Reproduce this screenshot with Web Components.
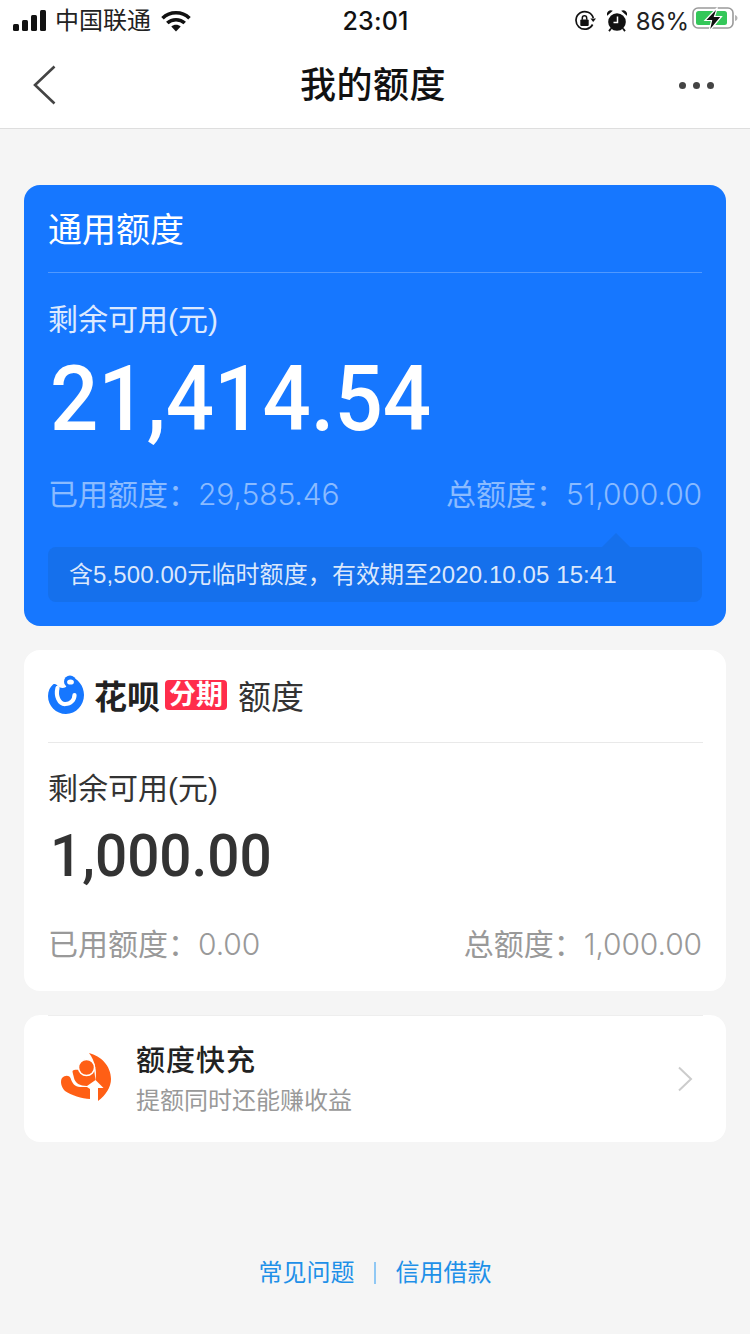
<!DOCTYPE html>
<html lang="zh">
<head>
<meta charset="utf-8">
<title>我的额度</title>
<style>
  html, body { margin: 0; padding: 0; }
  body {
    width: 750px;
    height: 1334px;
    overflow: hidden;
    background: #f5f5f5;
    font-family: "Liberation Sans", "Noto Sans CJK SC", sans-serif;
  }
</style>
</head>
<body>
<app-header></app-header>
<quota-page>
  <quota-card variant="blue" remain="21,414.54" used="29,585.46" total="51,000.00">
    <span slot="title">通用额度</span>
    <temp-note slot="note">含5,500.00元临时额度，有效期至2020.10.05 15:41</temp-note>
  </quota-card>
  <quota-card remain="1,000.00" used="0.00" total="1,000.00">
    <huabei-title slot="title"></huabei-title>
  </quota-card>
  <boost-row></boost-row>
</quota-page>
<page-footer></page-footer>

<script>
class AppHeader extends HTMLElement {
  constructor() {
    super();
    this.attachShadow({ mode: 'open' });
  }

  connectedCallback() {
    this.shadowRoot.innerHTML = `
      <style>
        :host { display: block; background: #fff; border-bottom: 1px solid #dedede; height: 128px; color: #111; }
        .status { height: 42px; display: grid; grid-template-columns: 1fr auto 1fr; align-items: center; padding: 0 12px 0 13px; }
        .left, .right { display: flex; align-items: center; }
        .right { justify-content: flex-end; }
        .carrier { font-size: 24px; margin: 0 10px 0 9px; color: #222; line-height: 42px; }
        .time { font-size: 25px; font-weight: 500; font-family: Inter, "Liberation Sans", sans-serif; letter-spacing: 0.2px; }
        .pct { font-size: 24px; font-family: Inter, "Liberation Sans", sans-serif; margin: 0 3px 0 9px; color: #222; }
        .battery { margin-bottom: 4px; overflow: visible; }
        .nav { height: 86px; display: grid; grid-template-columns: 1fr auto 1fr; align-items: center; padding: 0 36px 0 32px; }
        h1 { margin: 0 0 6px; font-size: 36px; font-weight: 500; color: #111; letter-spacing: .5px; }
        .more { justify-self: end; display: flex; gap: 7px; }
        .more i { width: 7px; height: 7px; border-radius: 50%; background: #444; }
        svg { display: block; }
      </style>
      <div class="status">
        <div class="left">
          <svg width="33" height="22" viewBox="0 0 33 22" fill="#111"><rect x="0" y="14" width="6" height="7" rx="1.5"/><rect x="9" y="10" width="6" height="11" rx="1.5"/><rect x="18" y="5" width="6" height="16" rx="1.5"/><rect x="27" y="0" width="6" height="21" rx="1.5"/></svg>
          <span class="carrier">中国联通</span>
          <svg width="30" height="22" viewBox="0 0 30 22" fill="none" stroke="#111" stroke-width="3.6"><path d="M1.5 8.200C9 1 21 1 28.500 8.200"/><path d="M6.300 13C11 8.600 19 8.600 23.700 13"/><path d="M15 21.500l-4.700-5c2.600-2.200 6.800-2.200 9.400 0z" fill="#111" stroke="none"/></svg>
        </div>
        <div class="time">23:01</div>
        <div class="right">
          <svg width="22" height="22" viewBox="0 0 22 22" fill="none"><path d="M18.600 14.500A8.800 8.800 0 1 1 19.300 8" stroke="#111" stroke-width="1.700"/><path d="M16.400 8.500h5.600l-2.800 3.600z" fill="#111"/><rect x="6.300" y="9.400" width="8.400" height="6.600" rx="1" fill="#111"/><path d="M8.300 9.800V8a2.200 2.200 0 0 1 4.400 0v1.800" stroke="#111" stroke-width="1.500"/></svg>
          <svg style="margin-left:11px" width="20" height="22" viewBox="0 0 20 22"><circle cx="10" cy="12" r="8.800" fill="#111"/><path d="M10.500 6.500V12.500H6.500" stroke="#fff" stroke-width="1.500" fill="none"/><path d="M.2 5.800A4 4 0 0 1 5.800 .8zM19.800 5.800A4 4 0 0 0 14.200 .8z" fill="#111"/><path d="M4 18.500l-2 2.600M16 18.500l2 2.600" stroke="#111" stroke-width="1.800"/></svg>
          <span class="pct">86%</span>
          <svg class="battery" width="46" height="24" viewBox="0 0 46 24"><rect x="1" y="1" width="40" height="20" rx="5" fill="none" stroke="#9a9a9a" stroke-width="1.600"/><rect x="4" y="4" width="31" height="14" rx="2.500" fill="#34c759"/><path d="M43 8c1.600.5 2.500 1.500 2.500 3s-.9 2.500-2.500 3z" fill="#b5b5b5"/><path d="M25.500 .5 13 13.500h6.500L17 24.500 29.500 9.500h-7z" fill="#111" stroke="#fff" stroke-width="1.200"/></svg>
        </div>
      </div>
      <div class="nav">
        <svg width="26" height="40" viewBox="0 0 26 40" fill="none"><path d="M22.500 1.500 3 20l19.500 18.500" stroke="#444" stroke-width="2.600"/></svg>
        <h1>我的额度</h1>
        <div class="more"><i></i><i></i><i></i></div>
      </div>
    `;
  }
}

class QuotaPage extends HTMLElement {
  constructor() {
    super();
    this.attachShadow({ mode: 'open' });
  }

  connectedCallback() {
    this.shadowRoot.innerHTML = `
      <style>
        :host { display: flex; flex-direction: column; gap: 24px; padding: 56px 24px 0; }
      </style>
      <slot></slot>
    `;
  }
}

class QuotaCard extends HTMLElement {
  constructor() {
    super();
    this.attachShadow({ mode: 'open' });
  }

  connectedCallback() {
    const remain = this.getAttribute('remain');
    const used = this.getAttribute('used');
    const total = this.getAttribute('total');
    const blue = this.getAttribute('variant') === 'blue';

    this.shadowRoot.innerHTML = `
      <style>
        :host { display: block; border-radius: 16px; padding: 0 24px; background: ${blue ? '#1677ff' : '#fff'}; color: ${blue ? '#fff' : '#333'}; height: ${blue ? 441 : 341}px; box-sizing: border-box; }
        .title { height: ${blue ? 88 : 93}px; box-sizing: border-box; padding-bottom: 3px; margin-right: ${blue ? 0 : -1}px; display: flex; align-items: center; font-size: 34px; border-bottom: 1px solid ${blue ? 'rgba(255,255,255,.25)' : '#e9e9e9'}; }
        .label { font-size: 30px; line-height: 40px; margin-top: ${blue ? 27 : 26}px; opacity: ${blue ? .85 : 1}; }
        .amount { font-family: Roboto, sans-serif; font-weight: 500; line-height: ${blue ? 92 : 68}px; font-size: ${blue ? 91 : 60}px; margin: 13px 0 0 2px; transform: scaleX(${blue ? .935 : .945}); transform-origin: left center; }
        .stats { display: flex; justify-content: space-between; font-size: 30px; line-height: 40px; margin-top: ${blue ? 29 : 34}px; color: ${blue ? 'rgba(255,255,255,.5)' : '#999'}; }
        .num { font-family: Inter, "Liberation Sans", sans-serif; font-weight: 300; letter-spacing: -.1px; }
      </style>
      <div class="title"><slot name="title"></slot></div>
      <div class="label">剩余可用(元)</div>
      <div class="amount">${remain}</div>
      <div class="stats">
        <span>已用额度：<span class="num">${used}</span></span>
        <span>总额度：<span class="num">${total}</span></span>
      </div>
      <slot name="note"></slot>
    `;
  }
}

class TempNote extends HTMLElement {
  constructor() {
    super();
    this.attachShadow({ mode: 'open' });
  }

  connectedCallback() {
    this.shadowRoot.innerHTML = `
      <style>
        :host { display: block; position: relative; margin-top: 32px; height: 55px; line-height: 55px; padding: 0 21px; border-radius: 8px; background: #1570ec; color: rgba(255,255,255,.85); font-size: 24px; white-space: nowrap; letter-spacing: .1px; }
        :host::after { content: ""; position: absolute; right: 72px; top: -14px; border: 14px solid transparent; border-top: 0; border-bottom-color: #1570ec; }
      </style>
      <slot></slot>
    `;
  }
}

class HuabeiTitle extends HTMLElement {
  constructor() {
    super();
    this.attachShadow({ mode: 'open' });
  }

  connectedCallback() {
    this.shadowRoot.innerHTML = `
      <style>
        :host { display: flex; align-items: center; color: #333; }
        svg { display: block; margin-right: 7px; }
        .name { font-size: 33px; font-weight: 700; color: #222; }
        .tag { background: #ff2d4b; color: #fff; font-size: 27px; font-weight: 700; line-height: 30px; height: 30px; border-radius: 4px; padding: 0 4px; margin: 0 11px 0 5px; }
        .word { font-size: 33px; }
      </style>
      <svg width="39" height="39" viewBox="4 4 39 39">
        <path fill="#1677ff" d="M25 5C34 7 40 15 40 24 40 34 32 43 22 43 12 43 4 35 4 25 4 20 6 16 9 13.500 11 12.500 13 13.500 14 15.500 16 17 19 17.500 22 16z"/>
        <circle cx="26" cy="10.500" r="6" fill="#1677ff"/>
        <path fill="none" stroke="#fff" stroke-width="4.200" stroke-linecap="round" d="M13.500 17C11.500 25 15 33.500 21.500 33 26.500 33 30.500 29 30.500 24"/>
        <ellipse cx="26.500" cy="11" rx="3.400" ry="2.600" fill="#fff"/>
      </svg>
      <span class="name">花呗</span><span class="tag">分期</span><span class="word">额度</span>
    `;
  }
}

class BoostRow extends HTMLElement {
  constructor() {
    super();
    this.attachShadow({ mode: 'open' });
  }

  connectedCallback() {
    this.shadowRoot.innerHTML = `
      <style>
        :host { display: flex; position: relative; align-items: center; height: 127px; box-sizing: border-box; background: #fff; border-radius: 16px; padding: 0 33px 0 32px; }
        :host::before { content: ""; position: absolute; left: 24px; right: 23px; top: 0; height: 1px; background: #eee; }
        svg { display: block; flex: none; }
        .text { flex: 1; margin-left: 20px; padding-top: 2px; }
        .name { font-size: 29px; font-weight: 500; line-height: 38px; color: #222; letter-spacing: 1px; }
        .sub { font-size: 24px; line-height: 34px; color: #999; margin-top: 4px; }
      </style>
      <svg width="60" height="60" viewBox="0 0 60 60" fill="#ff5f15">
        <path d="M33 4C45 7 55 17 55 30 55 38 50 46 42 52V39H47.500L39.500 31C41 22 39 12 33 4z"/>
        <path d="M6 29C9 26 13 26 14.500 29 16 34 19 38 24 38H31L34 40V50C26 50 15 46 9 42 5 38 4 32 6 29z"/>
        <path d="M16.500 22C19 20 23 21 25 22L38 20 39.500 31 31 37C24 37 19 34 18 29 17.500 26 16.500 24 16.500 22z"/>
        <circle cx="30.500" cy="18.500" r="8" stroke="#fff" stroke-width="1.500"/>
      </svg>
      <div class="text">
        <div class="name">额度快充</div>
        <div class="sub">提额同时还能赚收益</div>
      </div>
      <svg width="16" height="26" viewBox="0 0 16 26" fill="none"><path d="M2 1.500 14 13 2 24.500" stroke="#ccc" stroke-width="2"/></svg>
    `;
  }
}

class PageFooter extends HTMLElement {
  constructor() {
    super();
    this.attachShadow({ mode: 'open' });
  }

  connectedCallback() {
    this.shadowRoot.innerHTML = `
      <style>
        :host { display: flex; justify-content: center; align-items: center; margin-top: 113px; color: #1e90e8; font-size: 24px; line-height: 36px; }
        i { width: 2px; height: 22px; background: #90c8f4; margin: 0 20px 0 19px; }
      </style>
      <span>常见问题</span><i></i><span>信用借款</span>
    `;
  }
}

customElements.define('app-header', AppHeader);
customElements.define('quota-page', QuotaPage);
customElements.define('quota-card', QuotaCard);
customElements.define('temp-note', TempNote);
customElements.define('huabei-title', HuabeiTitle);
customElements.define('boost-row', BoostRow);
customElements.define('page-footer', PageFooter);
</script>
</body>
</html>
